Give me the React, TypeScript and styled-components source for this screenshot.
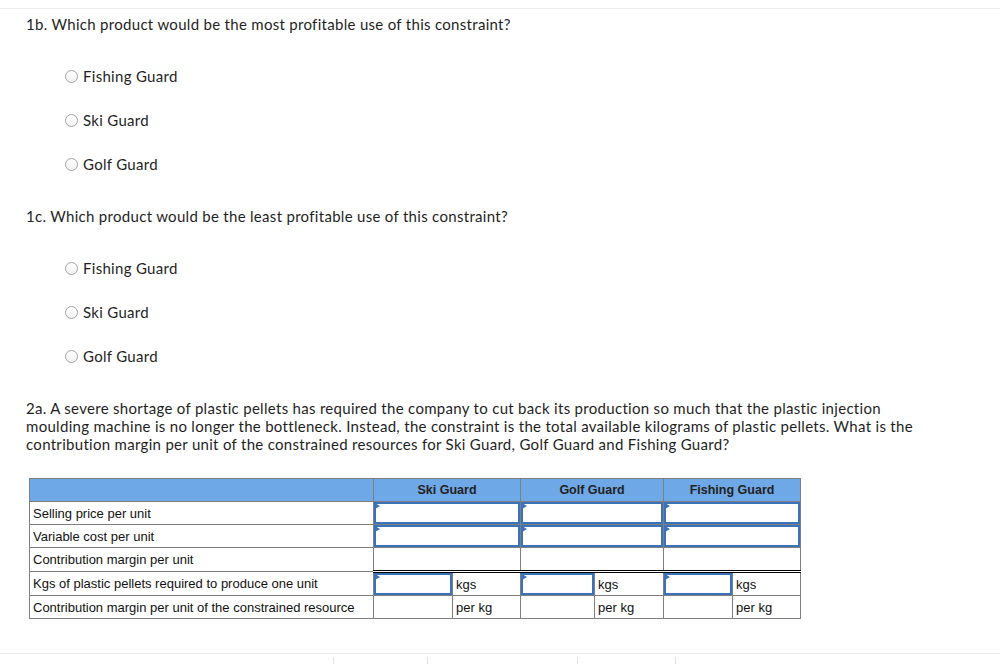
import React from "react";
import styled, { createGlobalStyle } from "styled-components";

const GlobalStyle = createGlobalStyle`
  html, body {
    margin: 0;
    padding: 0;
    background: #ffffff;
  }
  body {
    font-family: "Lato", "Open Sans", sans-serif;
    color: #1f1f1f;
    font-variant-ligatures: none;
  }
`;

const Page = styled.div`
  padding-top: 8px;
  width: 1000px;
`;

const Sheet = styled.div`
  border-top: 1px solid #ececec;
  padding: 0 26px 34px 26px;
`;

const Question = styled.p<{ $top: number }>`
  margin: ${(p) => p.$top}px 0 0 0;
  font-size: 15px;
  line-height: 18px;
  letter-spacing: 0.3px;
  color: #1f1f1f;
`;

const Paragraph = styled.p`
  margin: 35px 0 0 0;
  font-size: 15px;
  line-height: 17.75px;
  letter-spacing: 0.3px;
  color: #1f1f1f;
  max-width: 905px;
`;

const OptionList = styled.div`
  display: flex;
  flex-direction: column;
  gap: 26px;
  margin-top: 34px;
  padding-left: 39px;
`;

const Option = styled.label`
  display: flex;
  align-items: center;
  gap: 5px;
  font-size: 15px;
  line-height: 18px;
  letter-spacing: 0.3px;
  color: #1f1f1f;
`;

const Radio = styled.span`
  width: 13px;
  height: 13px;
  border-radius: 50%;
  border: 1px solid #a3a3a3;
  box-sizing: border-box;
  background: linear-gradient(#ffffff, #f2f2f2);
`;

const Table = styled.table`
  margin: 25px 0 0 3px;
  border-collapse: collapse;
  table-layout: fixed;
  width: 771px;
  font-family: "Liberation Sans", Arial, sans-serif;
  font-size: 13px;
  color: #111;
`;

const HeadCell = styled.th`
  background: #6fa8e6;
  border: 1px solid #7f7f7f;
  height: 22px;
  padding: 0;
  font-weight: bold;
  font-size: 12.5px;
  color: #222;
  text-align: center;
`;

const LabelCell = styled.td`
  border: 1px solid #7f7f7f;
  height: 22px;
  padding: 0 0 0 3px;
  white-space: nowrap;
`;

const ValueCell = styled.td<{ $calc?: boolean; $over?: boolean }>`
  border: 1px solid #7f7f7f;
  ${(p) => (p.$calc ? "border-top: 1px solid #000; border-bottom: 3px double #000;" : "")}
  ${(p) => (p.$over ? "border-top: 3px double #000;" : "")}
  height: 22px;
  padding: 0;
`;

const UnitCell = styled.td<{ $over?: boolean }>`
  border: 1px solid #7f7f7f;
  ${(p) => (p.$over ? "border-top: 3px double #000;" : "")}
  height: 22px;
  padding: 0 0 0 3px;
`;

const InputBox = styled.div`
  position: relative;
  height: 22px;
  border: 2px solid #3a72bb;
  box-sizing: border-box;
  background: #fff;

  &::before {
    content: "";
    position: absolute;
    left: -1px;
    top: -1px;
    border-top: 3px solid transparent;
    border-bottom: 3px solid transparent;
    border-left: 5px solid #3a72bb;
  }
`;

const Footer = styled.div`
  border-top: 1px solid #ececec;
  display: flex;
  padding-left: 333px;
  height: 10px;
`;

const Tick = styled.div<{ $w: number }>`
  width: ${(p) => p.$w}px;
  margin-top: 3px;
  height: 7px;
  border-left: 1px solid #e2e2e2;
`;

const products = ["Fishing Guard", "Ski Guard", "Golf Guard"];

const RadioGroup = () => (
  <OptionList>
    {products.map((name) => (
      <Option key={name}>
        <Radio />
        {name}
      </Option>
    ))}
  </OptionList>
);

const columns = ["Ski Guard", "Golf Guard", "Fishing Guard"];

const App = () => {
  return (
    <Page>
      <GlobalStyle />
      <Sheet>
        <Question $top={6}>
          1b. Which product would be the most profitable use of this constraint?
        </Question>
        <RadioGroup />
        <Question $top={34}>
          1c. Which product would be the least profitable use of this constraint?
        </Question>
        <RadioGroup />
        <Paragraph>
          2a. A severe shortage of plastic pellets has required the company to cut back its production so
          much that the plastic injection moulding machine is no longer the bottleneck. Instead, the
          constraint is the total available kilograms of plastic pellets. What is the contribution margin per
          unit of the constrained resources for Ski Guard, Golf Guard and Fishing Guard?
        </Paragraph>
        <Table>
          <colgroup>
            <col style={{ width: 344 }} />
            <col style={{ width: 79 }} />
            <col style={{ width: 68 }} />
            <col style={{ width: 74 }} />
            <col style={{ width: 69 }} />
            <col style={{ width: 69 }} />
            <col style={{ width: 68 }} />
          </colgroup>
          <thead>
            <tr>
              <HeadCell />
              {columns.map((c) => (
                <HeadCell key={c} colSpan={2}>
                  {c}
                </HeadCell>
              ))}
            </tr>
          </thead>
          <tbody>
            <tr>
              <LabelCell>Selling price per unit</LabelCell>
              {columns.map((c) => (
                <ValueCell key={c} colSpan={2}>
                  <InputBox />
                </ValueCell>
              ))}
            </tr>
            <tr>
              <LabelCell>Variable cost per unit</LabelCell>
              {columns.map((c) => (
                <ValueCell key={c} colSpan={2}>
                  <InputBox />
                </ValueCell>
              ))}
            </tr>
            <tr>
              <LabelCell>Contribution margin per unit</LabelCell>
              {columns.map((c) => (
                <ValueCell key={c} colSpan={2} $calc />
              ))}
            </tr>
            <tr>
              <LabelCell>Kgs of plastic pellets required to produce one unit</LabelCell>
              {columns.map((c) => (
                <React.Fragment key={c}>
                  <ValueCell $over>
                    <InputBox />
                  </ValueCell>
                  <UnitCell $over>kgs</UnitCell>
                </React.Fragment>
              ))}
            </tr>
            <tr>
              <LabelCell>Contribution margin per unit of the constrained resource</LabelCell>
              {columns.map((c) => (
                <React.Fragment key={c}>
                  <ValueCell />
                  <UnitCell>per kg</UnitCell>
                </React.Fragment>
              ))}
            </tr>
          </tbody>
        </Table>
      </Sheet>
      <Footer>
        <Tick $w={93} />
        <Tick $w={149} />
        <Tick $w={97} />
        <Tick $w={20} />
      </Footer>
    </Page>
  );
};

export default App;
